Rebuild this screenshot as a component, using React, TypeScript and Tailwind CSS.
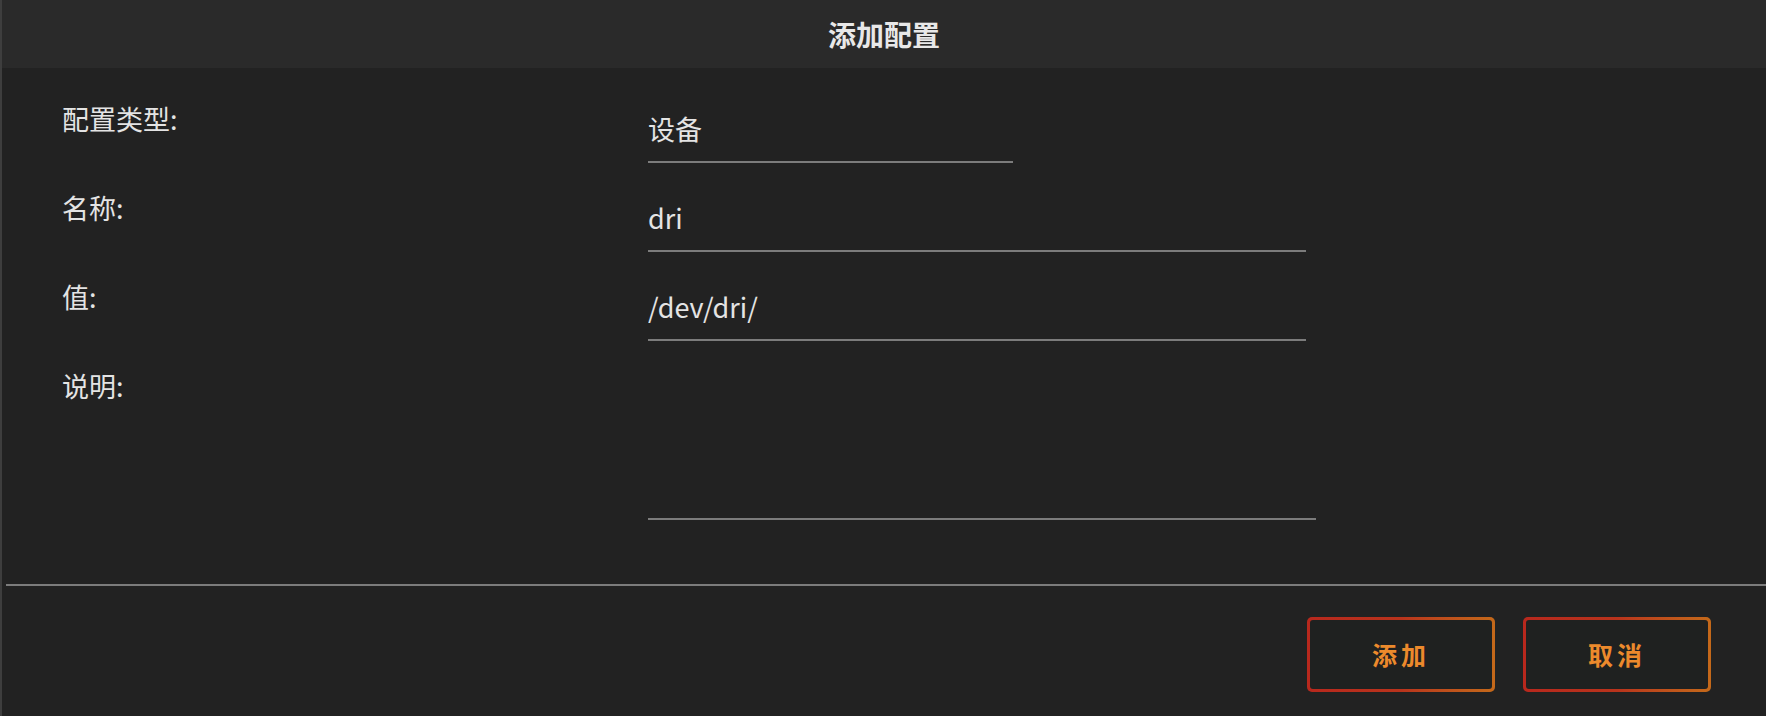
import React, { useState } from 'react';

const font = { fontFamily: '"Noto Sans CJK SC", "Noto Sans", sans-serif' };

interface FieldRowProps {
  label: string;
  children: React.ReactNode;
}

function FieldRow({ label, children }: FieldRowProps) {
  return (
    <div className="flex">
      <div className="w-[586px] shrink-0 text-[27px] leading-[36px] text-[#e4e4e4]">{label}</div>
      <div className="pt-[10px]">{children}</div>
    </div>
  );
}

function GradientButton({ children }: { children: React.ReactNode }) {
  return (
    <button className="w-[188px] h-[75px] rounded-[5px] p-[3px] bg-gradient-to-r from-[#b8281d] via-[#b9331c] to-[#c4691a]">
      <span className="flex h-full w-full items-center justify-center rounded-[3px] bg-[#1f2120] text-[25px] font-bold tracking-[4px] text-[#ec8a2c]">
        {children}
      </span>
    </button>
  );
}

export default function App() {
  const [type] = useState('设备');
  const [name, setName] = useState('dri');
  const [value, setValue] = useState('/dev/dri/');
  const [desc, setDesc] = useState('');

  return (
    <div className="w-[1766px] h-[716px] bg-[#222222] border-l-2 border-[#3e3e3e] flex flex-col overflow-hidden" style={font}>
      {/* Header */}
      <div className="h-[68px] shrink-0 bg-[#2a2a2a] flex items-center justify-center">
        <h1 className="text-[28px] font-bold text-[#e8e8e8] leading-none">添加配置</h1>
      </div>

      {/* Form */}
      <div className="pl-[60px] pt-[33px] flex flex-col gap-[27px]">
        <FieldRow label="配置类型:">
          <div className="w-[365px] border-b-2 border-[#7c7c7c] pb-[14px] text-[27px] leading-[36px] text-[#e4e4e4]">
            {type}
          </div>
        </FieldRow>
        <FieldRow label="名称:">
          <input
            value={name}
            onChange={(e) => setName(e.target.value)}
            className="block w-[658px] bg-transparent border-b-2 border-[#7c7c7c] pb-[14px] text-[27px] leading-[36px] text-[#e4e4e4] outline-none"
          />
        </FieldRow>
        <FieldRow label="值:">
          <input
            value={value}
            onChange={(e) => setValue(e.target.value)}
            className="block w-[658px] bg-transparent border-b-2 border-[#7c7c7c] pb-[14px] text-[27px] leading-[36px] text-[#e4e4e4] outline-none"
          />
        </FieldRow>
        <FieldRow label="说明:">
          <textarea
            value={desc}
            onChange={(e) => setDesc(e.target.value)}
            className="block w-[668px] h-[142px] resize-none bg-transparent border-b-2 border-[#7c7c7c] text-[27px] leading-[36px] text-[#e4e4e4] outline-none"
          />
        </FieldRow>
      </div>

      {/* Footer */}
      <div className="mt-[64px] ml-[4px] h-[2px] bg-[#7c7c7c]" />
      <div className="flex justify-end gap-[28px] pr-[55px] pt-[31px]">
        <GradientButton>添加</GradientButton>
        <GradientButton>取消</GradientButton>
      </div>
    </div>
  );
}
